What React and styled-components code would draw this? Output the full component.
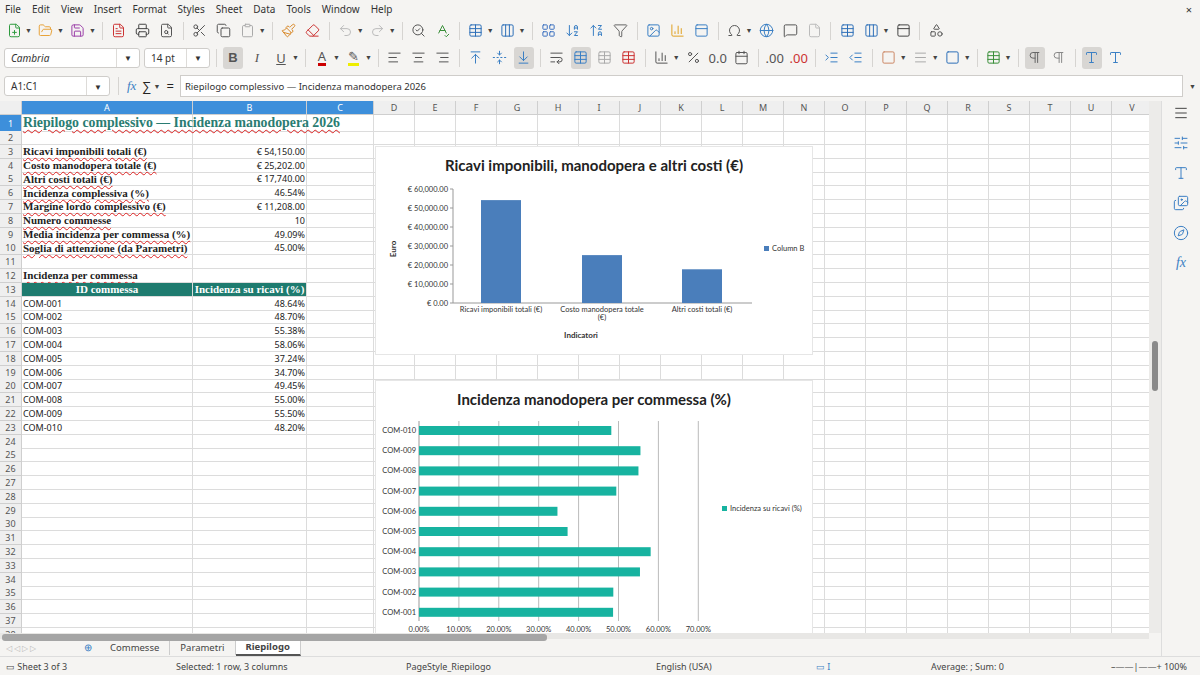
import React from "react";
import styled, { createGlobalStyle } from "styled-components";
import {
  FilePlus, FolderOpen, Save, FileText, Printer, FileSearch, Scissors, Copy, Clipboard,
  Paintbrush, Eraser, Undo2, Redo2, SearchCheck, SpellCheck, Table, Columns3, ArrowDownAZ, ArrowUpZA,
  Filter, Image, BarChart3, Omega, Globe, MessageSquare, File, LayoutGrid, PanelTop, Shapes,
  AlignLeft, AlignCenter, AlignRight, ArrowUpToLine, FoldVertical, ArrowDownToLine, WrapText,
  Percent, Calendar, IndentIncrease, IndentDecrease, Square, Menu, SlidersHorizontal, Type,
  Images, Compass, Pilcrow
} from "lucide-react";

const G = createGlobalStyle`
  html,body{margin:0;padding:0;background:#f7f6f5;overflow:hidden;}
  body{font-family:"Noto Sans","Open Sans",sans-serif;font-size:11px;color:#222;}
`;

const Frame = styled.div`width:1200px;height:675px;display:flex;flex-direction:column;background:#f5f4f2;`;
const MenuBar = styled.div`height:17px;display:flex;align-items:center;gap:11px;padding:0 5px;font-size:10px;color:#333;position:relative;`;
const Close = styled.span`position:absolute;right:8px;top:2px;font-size:11px;`;
const Tool = styled.div`height:27px;display:flex;align-items:center;gap:4px;padding:0 4px;`;
const Ico = styled.span`display:inline-flex;align-items:center;justify-content:center;width:20px;height:22px;border-radius:3px;color:${p=>p.c||"#555"};background:${p=>p.on?"#d8d6d3":"transparent"};font-size:13px;`;
const Sep = styled.span`width:1px;height:18px;background:#d6d4d1;margin:0 2px;`;
const Drop = styled.span`font-size:7px;color:#444;margin-left:-3px;`;
const Combo = styled.div`height:20px;width:${p=>p.w}px;border:1px solid #cfcdca;background:#fff;border-radius:3px;display:flex;align-items:center;font-size:10px;font-style:${p=>p.i?"italic":"normal"};color:#333;padding-left:6px;box-sizing:border-box;justify-content:space-between;`;
const ComboBtn = styled.span`width:22px;height:100%;border-left:1px solid #dddbd8;display:flex;align-items:center;justify-content:center;font-size:8px;`;
const FBar = styled.div`height:30px;display:flex;align-items:center;gap:6px;padding:0 4px;`;
const FInput = styled.div`flex:1;height:20px;background:#fff;border:1px solid #cfcdca;display:flex;align-items:center;padding-left:4px;font-size:9.5px;color:#333;`;
const Body = styled.div`flex:1;display:flex;min-height:0;`;
const Main = styled.div`flex:1;display:flex;flex-direction:column;min-width:0;`;
const SheetWrap = styled.div`display:flex;height:532px;`;
const Grid = styled.div`position:relative;flex:1;overflow:hidden;background:#fff;`;
const Row = styled.div`display:grid;grid-template-columns:22px 171px 114px 67px repeat(19,41px);height:${p=>p.h||13.8}px;`;
const Cell = styled.div`border-right:1px solid #dcdcdc;border-bottom:1px solid #dcdcdc;box-sizing:border-box;overflow:visible;white-space:nowrap;display:flex;align-items:center;padding:0 1px;
  font-family:${p=>p.serif?'"Liberation Serif","DejaVu Serif",serif':'"Noto Sans","Open Sans",sans-serif'};
  font-weight:${p=>p.b?700:400};font-size:${p=>p.fs||9}px;color:${p=>p.col||"#222"};
  justify-content:${p=>p.r?"flex-end":p.c?"center":"flex-start"};background:${p=>p.bg||"transparent"};
  ${p=>p.wavy?"text-decoration:underline wavy #d22;text-decoration-thickness:1px;text-underline-offset:2px;":""}`;
const Head = styled.div`box-sizing:border-box;border-right:1px solid #cfcfcf;border-bottom:1px solid #cfcfcf;display:flex;align-items:center;justify-content:center;font-size:9px;
  background:${p=>p.sel?"#3d8fdb":"#efefef"};color:${p=>p.sel?"#fff":"#555"};`;
const ChartBox = styled.div`position:absolute;background:#fff;border:1px solid #e6e6e6;left:${p=>p.x}px;top:${p=>p.y}px;width:${p=>p.w}px;height:${p=>p.h}px;`;
const VScroll = styled.div`width:12px;background:#ecebe9;position:relative;`;
const Thumb = styled.div`position:absolute;left:3px;top:240px;width:6px;height:50px;background:#8a8a8a;border-radius:3px;`;
const HScroll = styled.div`height:9px;background:#e8e7e5;position:relative;margin-right:12px;`;
const HThumb = styled.div`position:absolute;left:2px;top:1px;width:545px;height:7px;background:#a5a5a5;border-radius:3px;`;
const Tabs = styled.div`height:17px;display:flex;align-items:center;font-size:9.5px;color:#444;padding-left:6px;`;
const Nav = styled.span`color:#bbb;width:70px;font-size:8px;`;
const Tab = styled.span`padding:0 10px;border-right:1px solid #ccc;font-weight:${p=>p.a?700:400};background:${p=>p.a?"#fff":"transparent"};height:15px;display:flex;align-items:center;${p=>p.a?"border-bottom:2px solid #555;":""}`;
const Status = styled.div`height:18px;display:grid;grid-template-columns:170px 230px 250px 160px 115px 180px 95px;align-items:center;font-size:9px;color:#444;border-top:1px solid #ddd;padding-left:6px;`;
const Side = styled.div`width:38px;display:flex;flex-direction:column;align-items:center;gap:14px;padding-top:4px;border-left:1px solid #ddd;color:#3b7fc4;`;

const cols=["A","B","C","D","E","F","G","H","I","J","K","L","M","N","O","P","Q","R","S","T","U","V"];
const kv=[["Ricavi imponibili totali (€)","€ 54,150.00"],["Costo manodopera totale (€)","€ 25,202.00"],["Altri costi totali (€)","€ 17,740.00"],["Incidenza complessiva (%)","46.54%"],["Margine lordo complessivo (€)","€ 11,208.00"],["Numero commesse","10"],["Media incidenza per commessa (%)","49.09%"],["Soglia di attenzione (da Parametri)","45.00%"]];
const com=[["COM-001",48.64],["COM-002",48.70],["COM-003",55.38],["COM-004",58.06],["COM-005",37.24],["COM-006",34.70],["COM-007",49.45],["COM-008",55.00],["COM-009",55.50],["COM-010",48.20]];

function rowCells(n){
  if(n===1) return [<Cell key="a" serif b fs={13.8} col="#2a7c72" wavy style={{zIndex:1}}>Riepilogo complessivo — Incidenza manodopera 2026</Cell>,<Cell key="b"/>,<Cell key="c"/>];
  if(n>=3&&n<=10){const [k,v]=kv[n-3];return [<Cell key="a" serif b fs={11} wavy>{k}</Cell>,<Cell key="b" r>{v}</Cell>,<Cell key="c"/>];}
  if(n===12) return [<Cell key="a" serif b fs={11} wavy>Incidenza per commessa</Cell>,<Cell key="b"/>,<Cell key="c"/>];
  if(n===13) return [<Cell key="a" serif b fs={11} c bg="#1e7b6f" col="#fff">ID commessa</Cell>,<Cell key="b" serif b fs={11} c bg="#1e7b6f" col="#fff">Incidenza su ricavi (%)</Cell>,<Cell key="c"/>];
  if(n>=14&&n<=23){const [k,v]=com[n-14];return [<Cell key="a">{k}</Cell>,<Cell key="b" r>{v.toFixed(2)}%</Cell>,<Cell key="c"/>];}
  return [<Cell key="a"/>,<Cell key="b"/>,<Cell key="c"/>];
}

const CF="Lato,'Open Sans',sans-serif";
function Chart1(){
  const y0=156,k=19/10000;
  const bars=[[105,54150,["Ricavi imponibili totali (€)"]],[206,25202,["Costo manodopera totale","(€)"]],[306,17740,["Altri costi totali (€)"]]];
  return <svg width="436" height="207" style={{display:"block"}} fontFamily={CF}>
    <text x="218" y="24" textAnchor="middle" fontSize="15" fontWeight="700" fill="#222">Ricavi imponibili, manodopera e altri costi (€)</text>
    {[0,1,2,3,4,5,6].map(i=><g key={i}><text x="72" y={y0-i*19+3} textAnchor="end" fontSize="7.5" fill="#333">€ {(i*10).toString()}{i?",000.00":".00"}</text><line x1="74" x2="77" y1={y0-i*19} y2={y0-i*19} stroke="#999"/></g>)}
    <line x1="77" x2="77" y1={y0-114} y2={y0} stroke="#999"/>
    <line x1="77" x2="376" y1={y0} y2={y0} stroke="#999"/>
    {bars.map(([x,v,l],i)=><g key={i}><rect x={x} y={y0-v*k} width="40" height={v*k} fill="#4a7ebb"/>
      {l.map((t,j)=><text key={j} x={x+20} y={y0+9+j*8} textAnchor="middle" fontSize="7.5" fill="#333">{t}</text>)}</g>)}
    <text x="205" y="191" textAnchor="middle" fontSize="8" fontWeight="700" fill="#333">Indicatori</text>
    <text transform="translate(20,102) rotate(-90)" textAnchor="middle" fontSize="8" fontWeight="700" fill="#333">Euro</text>
    <rect x="388" y="99" width="5" height="5" fill="#4a7ebb"/><text x="396" y="104" fontSize="7.5" fill="#333">Column B</text>
  </svg>;
}
function Chart2(){
  const x0=43,k=3.99;
  return <svg width="436" height="253" style={{display:"block"}} fontFamily={CF}>
    <text x="218" y="24" textAnchor="middle" fontSize="15" fontWeight="700" fill="#222">Incidenza manodopera per commessa (%)</text>
    {[0,1,2,3,4,5,6,7].map(i=><g key={i}><line x1={x0+i*39.9} x2={x0+i*39.9} y1="40" y2="240" stroke={i?"#bbb":"#999"}/><text x={x0+i*39.9} y="251" textAnchor="middle" fontSize="7.5" fill="#333">{i*10}.00%</text></g>)}
    {[...com].reverse().map(([n,v],i)=>{const y=49+i*20.2;return <g key={n}><rect x={x0} y={y-4} width={v*k} height="9" fill="#17b3a0"/><text x={x0-3} y={y+3} textAnchor="end" fontSize="7.5" fill="#333">{n}</text></g>})}
    <rect x="346" y="125" width="5" height="5" fill="#17b3a0"/><text x="354" y="130" fontSize="7.5" fill="#333">Incidenza su ricavi (%)</text>
  </svg>;
}

const I=(C,c,on)=><Ico c={c} on={on}><C size={15} strokeWidth={1.6}/></Ico>;

export default function App(){
  const rows=[];
  for(let n=1;n<=38;n++){
    rows.push(<Row key={n} h={n===1?16:13.8}><Head sel={n===1}>{n}</Head>{rowCells(n)}{cols.slice(3).map(c=><Cell key={c}/>)}</Row>);
  }
  return <Frame><G/>
    <MenuBar>{["File","Edit","View","Insert","Format","Styles","Sheet","Data","Tools","Window","Help"].map(m=><span key={m}>{m}</span>)}<Close>×</Close></MenuBar>
    <Tool>
      {I(FilePlus,"#2e9a3e")}<Drop>▼</Drop>{I(FolderOpen,"#e8a33a")}<Drop>▼</Drop>{I(Save,"#9b3fa8")}<Drop>▼</Drop><Sep/>
      {I(FileText,"#c33")}{I(Printer,"#444")}{I(FileSearch,"#555")}<Sep/>
      {I(Scissors)}{I(Copy)}{I(Clipboard,"#aaa")}<Drop>▼</Drop><Sep/>{I(Paintbrush,"#d98a2b")}{I(Eraser,"#c33")}<Sep/>
      {I(Undo2,"#bbb")}<Drop>▼</Drop>{I(Redo2,"#bbb")}<Drop>▼</Drop><Sep/>{I(SearchCheck)}{I(SpellCheck,"#3a8f3a")}<Sep/>
      {I(Table,"#2d6fb8")}<Drop>▼</Drop>{I(Columns3,"#2d6fb8")}<Drop>▼</Drop><Sep/>{I(LayoutGrid,"#3a6fbf")}{I(ArrowDownAZ,"#3a7fc4")}{I(ArrowUpZA,"#3a7fc4")}{I(Filter,"#666")}<Sep/>
      {I(Image,"#3a7fc4")}{I(BarChart3,"#e0a020")}{I(PanelTop,"#3a7fc4")}<Sep/>{I(Omega)}<Drop>▼</Drop>{I(Globe,"#3a7fc4")}{I(MessageSquare)}{I(File,"#bbb")}<Sep/>
      {I(Table,"#2d6fb8")}{I(Columns3,"#2d6fb8")}<Drop>▼</Drop>{I(PanelTop,"#444")}<Sep/>{I(Shapes)}
    </Tool>
    <Tool>
      <Combo w={136} i>Cambria<ComboBtn>▼</ComboBtn></Combo><Combo w={66}>14 pt<ComboBtn>▼</ComboBtn></Combo><Sep/>
      <Ico on><b style={{fontFamily:"Liberation Sans"}}>B</b></Ico><Ico><i style={{fontFamily:"Liberation Serif"}}>I</i></Ico><Ico><u>U</u></Ico><Drop>▼</Drop><Sep/>
      <Ico><span style={{borderBottom:"3px solid #c00",lineHeight:"13px"}}>A</span></Ico><Drop>▼</Drop><Ico><span style={{borderBottom:"3px solid #ee0",lineHeight:"13px"}}>✎</span></Ico><Drop>▼</Drop><Sep/>
      {I(AlignLeft)}{I(AlignCenter)}{I(AlignRight)}<Sep/>{I(ArrowUpToLine,"#3a7fc4")}{I(FoldVertical,"#3a7fc4")}{I(ArrowDownToLine,"#3a7fc4",true)}<Sep/>{I(WrapText)}{I(Table,"#3a7fc4",true)}{I(Table,"#aaa")}{I(Table,"#c33")}<Sep/>
      {I(BarChart3)}<Drop>▼</Drop>{I(Percent)}<Ico>0.0</Ico>{I(Calendar)}<Sep/><Ico>.00</Ico><Ico c="#c33">.00</Ico><Sep/>{I(IndentIncrease,"#3a7fc4")}{I(IndentDecrease,"#3a7fc4")}<Sep/>
      {I(Square,"#c86")}<Drop>▼</Drop>{I(Menu,"#aaa")}<Drop>▼</Drop>{I(Square,"#2d6fb8")}<Drop>▼</Drop><Sep/>{I(Table,"#3a8f3a")}<Drop>▼</Drop><Sep/>{I(Pilcrow,"#666",true)}{I(Pilcrow,"#888")}<Sep/>{I(Type,"#3a7fc4",true)}{I(Type,"#3a7fc4")}
    </Tool>
    <FBar>
      <Combo w={106}>A1:C1<ComboBtn>▼</ComboBtn></Combo><Sep/>
      <span style={{color:"#3a7fc4",fontStyle:"italic",fontFamily:"Liberation Serif",fontSize:13}}>fx</span><span style={{fontSize:13}}>∑</span><Drop>▼</Drop><span style={{fontSize:13}}>=</span>
      <FInput>Riepilogo complessivo — Incidenza manodopera 2026</FInput><Drop style={{marginLeft:0}}>▼</Drop>
    </FBar>
    <Body>
      <Main>
        <SheetWrap>
          <Grid>
            <Row h={14}><Head/>{cols.map((c,i)=><Head key={c} sel={i<3}>{c}</Head>)}</Row>
            {rows}
            <ChartBox x={375} y={45} w={436} h={207}><Chart1/></ChartBox>
            <ChartBox x={375} y={279} w={436} h={253}><Chart2/></ChartBox>
          </Grid>
          <VScroll><Thumb/></VScroll>
        </SheetWrap>
        <HScroll><HThumb/></HScroll>
        <Tabs><Nav>◁ ◁ ▷ ▷</Nav><span style={{color:"#3a7fc4",padding:"0 8px"}}>⊕</span><Tab>Commesse</Tab><Tab>Parametri</Tab><Tab a>Riepilogo</Tab></Tabs>
      </Main>
      <Side>{[Menu,SlidersHorizontal,Type,Images,Compass].map((C,i)=><C key={i} size={16} strokeWidth={1.5} color={i===0?"#444":"#3b7fc4"}/>)}<span style={{fontStyle:"italic",fontFamily:"Liberation Serif",fontSize:14}}>fx</span></Side>
    </Body>
    <Status><span>▭ Sheet 3 of 3</span><span>Selected: 1 row, 3 columns</span><span>PageStyle_Riepilogo</span><span>English (USA)</span><span style={{color:"#3a7fc4"}}>▭ I</span><span>Average: ; Sum: 0</span><span>–——|——+ 100%</span></Status>
  </Frame>;
}
